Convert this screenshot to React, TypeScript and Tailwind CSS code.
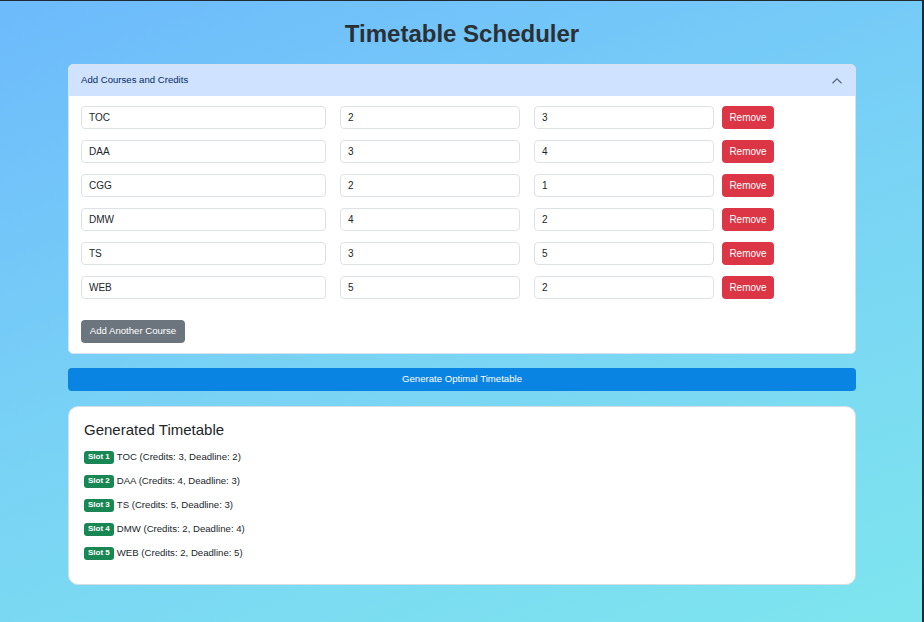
import React, { useState } from 'react';

type Course = { name: string; credits: string; deadline: string };

const initialCourses: Course[] = [
  { name: 'TOC', credits: '2', deadline: '3' },
  { name: 'DAA', credits: '3', deadline: '4' },
  { name: 'CGG', credits: '2', deadline: '1' },
  { name: 'DMW', credits: '4', deadline: '2' },
  { name: 'TS', credits: '3', deadline: '5' },
  { name: 'WEB', credits: '5', deadline: '2' },
];

const schedule = [
  { slot: 1, text: 'TOC (Credits: 3, Deadline: 2)' },
  { slot: 2, text: 'DAA (Credits: 4, Deadline: 3)' },
  { slot: 3, text: 'TS (Credits: 5, Deadline: 3)' },
  { slot: 4, text: 'DMW (Credits: 2, Deadline: 4)' },
  { slot: 5, text: 'WEB (Credits: 2, Deadline: 5)' },
];

const inputCls =
  'h-[23px] rounded-[4px] border border-[#dee2e6] bg-white px-[7px] text-[10px] text-[#212529] outline-none';

export default function App() {
  const [courses, setCourses] = useState<Course[]>(initialCourses);
  const [open, setOpen] = useState(true);

  const update = (i: number, key: keyof Course, value: string) => {
    setCourses((prev) => prev.map((c, idx) => (idx === i ? { ...c, [key]: value } : c)));
  };

  return (
    <div
      className="min-h-[622px] w-[924px] border-t border-r-2 border-[#1f2a33] bg-[linear-gradient(160deg,#6dbafc_0%,#79d3f5_50%,#7ee5ee_100%)] font-['Liberation_Sans',Arial,sans-serif]"
    >
      <div className="ml-[68px] w-[788px] pt-[19px] pb-[36px]">
        <h1 className="text-center text-[24px] font-bold leading-[28px] text-[#2b3035]">
          Timetable Scheduler
        </h1>

        <div className="mt-[16px] overflow-hidden rounded-[5px] border border-[#d8e2ee] bg-white">
          <button
            onClick={() => setOpen(!open)}
            className="flex h-[31px] w-full items-center justify-between bg-[#cfe2ff] px-[12px] text-[9.6px] text-[#052c65]"
          >
            <span className="-mt-[1px]">Add Courses and Credits</span>
            <svg width="12" height="12" viewBox="0 0 16 16" fill="none" stroke="#52627a" strokeWidth="1.5" className={open ? '' : 'rotate-180'}>
              <path d="M2 11l6-6 6 6" />
            </svg>
          </button>

          {open && (
            <div className="px-[12px] pt-[10px] pb-[10px]">
              <div className="flex flex-col gap-[11px]">
                {courses.map((c, i) => (
                  <div key={i} className="flex items-center">
                    <input className={`${inputCls} w-[245px]`} value={c.name} onChange={(e) => update(i, 'name', e.target.value)} />
                    <input className={`${inputCls} ml-[14px] w-[180px]`} value={c.credits} onChange={(e) => update(i, 'credits', e.target.value)} />
                    <input className={`${inputCls} ml-[14px] w-[180px]`} value={c.deadline} onChange={(e) => update(i, 'deadline', e.target.value)} />
                    <button
                      onClick={() => setCourses(courses.filter((_, idx) => idx !== i))}
                      className="ml-[8px] h-[23px] w-[52px] rounded-[4px] bg-[#dc3545] text-[10px] text-white"
                    >
                      Remove
                    </button>
                  </div>
                ))}
              </div>
              <button
                onClick={() => setCourses([...courses, { name: '', credits: '', deadline: '' }])}
                className="mt-[21px] h-[23px] w-[104px] rounded-[4px] bg-[#6c757d] text-[9.6px] text-white"
              >
                Add Another Course
              </button>
            </div>
          )}
        </div>

        <button className="mt-[14px] h-[23px] w-full rounded-[4px] bg-[#0a84e2] text-[9.6px] text-white">
          Generate Optimal Timetable
        </button>

        <div className="mt-[15px] h-[179px] rounded-[10px] border border-[#d6dde4] bg-white px-[15px] pt-[14px]">
          <h2 className="text-[15px] leading-[18px] text-[#212529]">Generated Timetable</h2>
          <div className="mt-[11px] flex flex-col gap-[10px]">
            {schedule.map((s) => (
              <div key={s.slot} className="flex h-[14px] items-center text-[9.6px] text-[#212529]">
                <span className="mr-[3px] rounded-[3px] bg-[#198754] px-[4px] py-[1.5px] text-[8px] font-bold leading-[10px] text-white">
                  Slot {s.slot}
                </span>
                <span>{s.text}</span>
              </div>
            ))}
          </div>
        </div>
      </div>
    </div>
  );
}
